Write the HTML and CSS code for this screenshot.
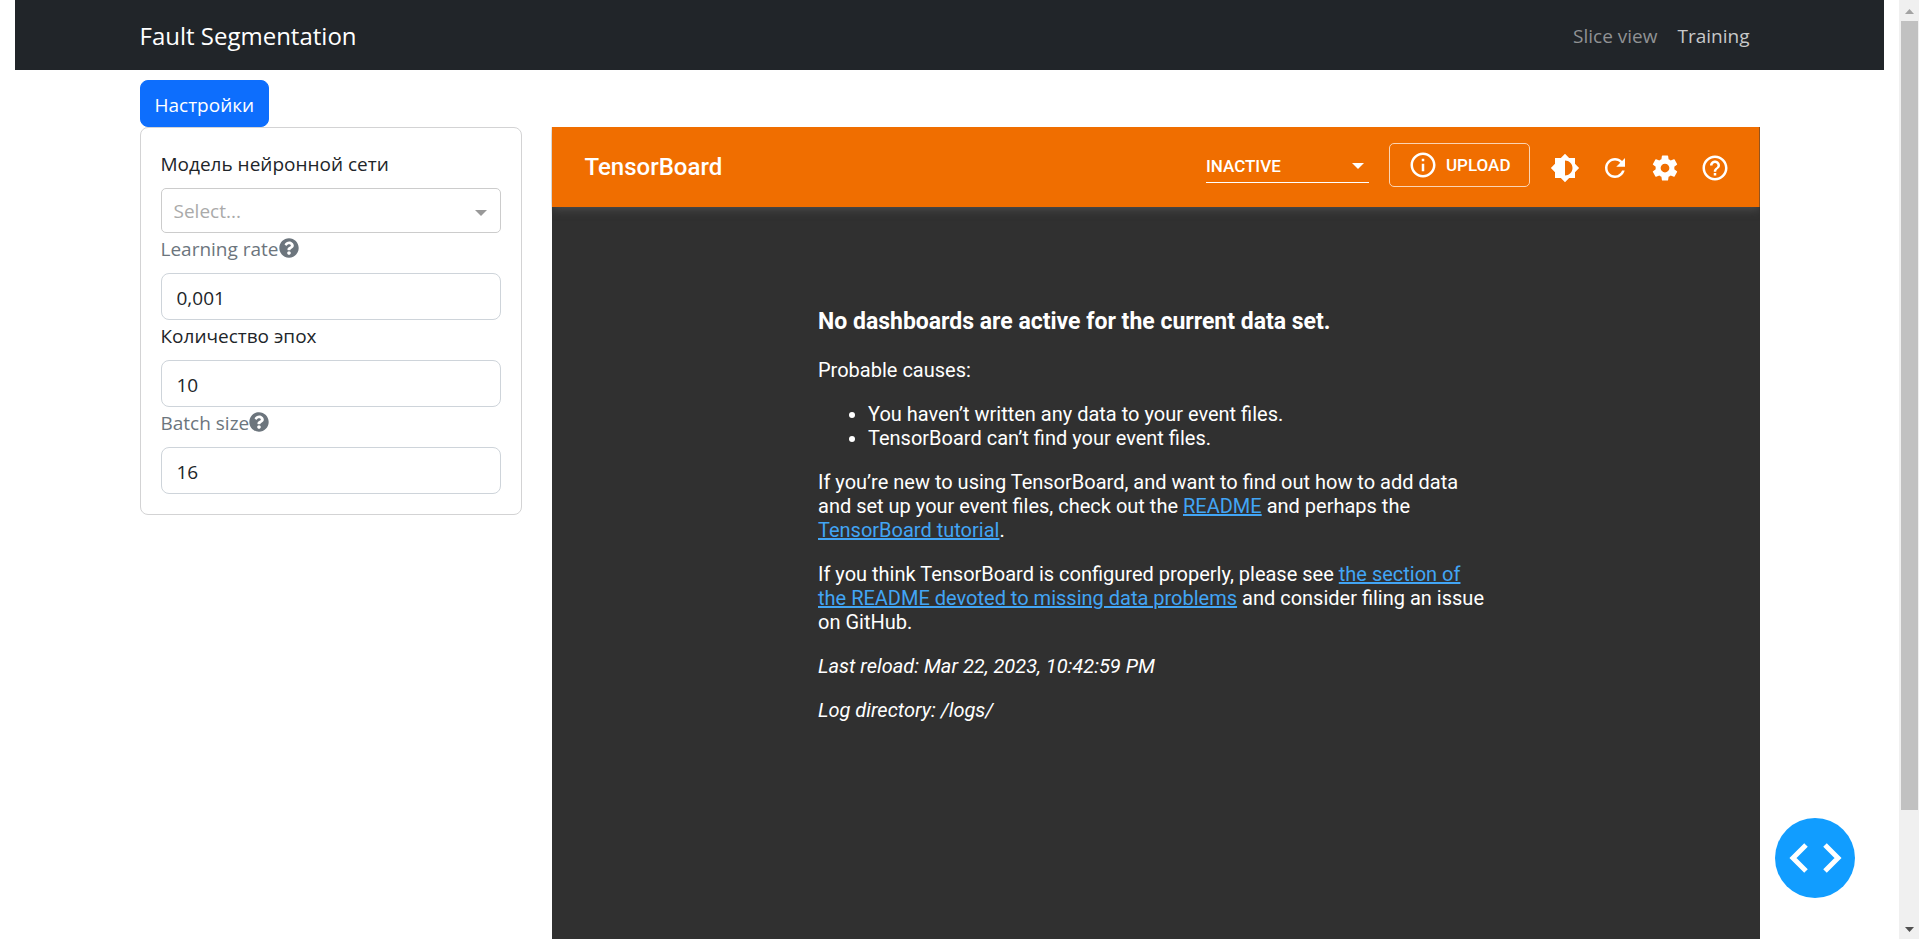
FILE: index.html
```html
<!DOCTYPE html>
<html lang="ru">
<head>
<meta charset="utf-8">
<title>Fault Segmentation</title>
<link rel="stylesheet" href="styles.css">
</head>
<body>
<div class="viewport">
  <div class="page">
    <header class="navbar">
      <a class="brand" href="#">Fault Segmentation</a>
      <nav class="nav-links">
        <a href="#">Slice view</a>
        <a class="active" href="#">Training</a>
      </nav>
    </header>

    <main class="container">
      <div class="toolbar"><button class="btn-primary" type="button">Настройки</button></div>
      <div class="columns">
        <form class="card">
          <label for="model">Модель нейронной сети</label>
          <div class="select-wrap">
            <select id="model"><option>Select...</option></select>
          </div>
          <label class="muted" for="rate">Learning rate<svg class="hint" viewBox="0 0 512 512" aria-hidden="true"><path d="M504 256c0 137-111 248-248 248S8 393 8 256 119 8 256 8s248 111 248 248zM262.700 90c-54.500 0-89.300 23-116.500 63.800-3.500 5.300-2.400 12.400 2.700 16.300l34.700 26.300c5.200 3.900 12.600 3 16.700-2.100 17.900-22.700 30.100-35.800 57.300-35.800 20.400 0 45.700 13.100 45.700 33 0 15-12.400 22.700-32.500 34C247.100 238.500 216 254.900 216 296v4c0 6.600 5.400 12 12 12h56c6.600 0 12-5.400 12-12v-1.300c0-28.500 83.200-29.600 83.200-106.700 0-58-60.200-102-116.500-102zM256 338c-25.400 0-46 20.600-46 46s20.600 46 46 46 46-20.600 46-46-20.600-46-46-46z"/></svg></label>
          <input id="rate" type="text" value="0,001">
          <label for="epochs">Количество эпох</label>
          <input id="epochs" type="text" value="10">
          <label class="muted" for="batch">Batch size<svg class="hint" viewBox="0 0 512 512" aria-hidden="true"><path d="M504 256c0 137-111 248-248 248S8 393 8 256 119 8 256 8s248 111 248 248zM262.700 90c-54.500 0-89.300 23-116.500 63.800-3.500 5.300-2.400 12.400 2.700 16.300l34.700 26.300c5.200 3.900 12.600 3 16.700-2.100 17.900-22.700 30.100-35.800 57.300-35.800 20.400 0 45.700 13.100 45.700 33 0 15-12.400 22.700-32.500 34C247.100 238.500 216 254.900 216 296v4c0 6.600 5.400 12 12 12h56c6.600 0 12-5.400 12-12v-1.300c0-28.500 83.200-29.600 83.200-106.700 0-58-60.200-102-116.500-102zM256 338c-25.400 0-46 20.600-46 46s20.600 46 46 46 46-20.600 46-46-20.600-46-46-46z"/></svg></label>
          <input id="batch" type="text" value="16">
        </form>

        <section class="board">
          <header class="board-bar">
            <h1>TensorBoard</h1>
            <div class="plugin-select">
              <select aria-label="Dashboard"><option>INACTIVE</option></select>
            </div>
            <button class="upload" type="button">
              <svg viewBox="0 0 24 24" aria-hidden="true"><path d="M11 7h2v2h-2zm0 4h2v6h-2zm1-9C6.480 2 2 6.480 2 12s4.480 10 10 10 10-4.480 10-10S17.520 2 12 2zm0 18c-4.410 0-8-3.590-8-8s3.590-8 8-8 8 3.590 8 8-3.590 8-8 8z"/></svg>
              <span>UPLOAD</span>
            </button>
            <div class="icon-row">
              <button type="button" aria-label="Theme"><svg viewBox="0 0 24 24"><path d="M20 15.310L23.310 12 20 8.690V4h-4.690L12 .69 8.690 4H4v4.690L.69 12 4 15.310V20h4.690L12 23.310 15.310 20H20v-4.690zM12 18V6c3.310 0 6 2.690 6 6s-2.690 6-6 6z"/></svg></button>
              <button type="button" aria-label="Reload"><svg viewBox="0 0 24 24"><path d="M17.650 6.350C16.200 4.900 14.210 4 12 4c-4.420 0-7.990 3.580-7.990 8s3.570 8 7.990 8c3.730 0 6.840-2.550 7.730-6h-2.080c-.82 2.330-3.040 4-5.650 4-3.310 0-6-2.690-6-6s2.690-6 6-6c1.660 0 3.140.69 4.220 1.780L13 11h7V4l-2.350 2.350z"/></svg></button>
              <button type="button" aria-label="Settings"><svg viewBox="0 0 24 24"><path d="M19.430 12.980c.04-.32.07-.64.07-.98s-.03-.66-.07-.98l2.110-1.650c.19-.15.24-.42.12-.64l-2-3.460c-.12-.22-.39-.3-.61-.22l-2.490 1c-.52-.4-1.080-.73-1.690-.98l-.38-2.650C14.460 2.180 14.250 2 14 2h-4c-.25 0-.46.18-.49.42l-.38 2.650c-.61.25-1.170.59-1.690.98l-2.490-1c-.23-.09-.49 0-.61.22l-2 3.460c-.13.22-.07.49.12.64l2.110 1.650c-.04.32-.07.65-.07.98s.03.66.07.98l-2.110 1.650c-.19.15-.24.42-.12.64l2 3.460c.12.22.39.3.61.22l2.490-1c.52.4 1.080.73 1.690.98l.38 2.650c.03.24.24.42.49.42h4c.25 0 .46-.18.49-.42l.38-2.650c.61-.25 1.170-.59 1.690-.98l2.490 1c.23.09.49 0 .61-.22l2-3.460c.12-.22.07-.49-.12-.64l-2.110-1.650zM12 15.500c-1.930 0-3.500-1.570-3.500-3.500s1.570-3.500 3.500-3.500 3.500 1.570 3.500 3.500-1.570 3.500-3.500 3.500z"/></svg></button>
              <button type="button" aria-label="Help"><svg viewBox="0 0 24 24"><path d="M11 18h2v-2h-2v2zm1-16C6.480 2 2 6.480 2 12s4.480 10 10 10 10-4.480 10-10S17.520 2 12 2zm0 18c-4.410 0-8-3.590-8-8s3.590-8 8-8 8 3.590 8 8-3.590 8-8 8zm0-14c-2.210 0-4 1.790-4 4h2c0-1.100.9-2 2-2s2 .9 2 2c0 2-3 1.750-3 5h2c0-2.250 3-2.500 3-5 0-2.210-1.790-4-4-4z"/></svg></button>
            </div>
          </header>
          <article class="message">
            <h2>No dashboards are active for the current data set.</h2>
            <p>Probable causes:</p>
            <ul>
              <li>You haven’t written any data to your event files.</li>
              <li>TensorBoard can’t find your event files.</li>
            </ul>
            <p>If you’re new to using TensorBoard, and want to find out how to add data and set up your event files, check out the <a href="#">README</a> and perhaps the <a href="#">TensorBoard tutorial</a>.</p>
            <p>If you think TensorBoard is configured properly, please see <a href="#">the section of the README devoted to missing data problems</a> and consider filing an issue on GitHub.</p>
            <p><i>Last reload: Mar 22, 2023, 10:42:59 PM</i></p>
            <p><i>Log directory: /logs/</i></p>
          </article>
        </section>
      </div>
    </main>

    <button class="debug" type="button" aria-label="Debug menu">
      <svg viewBox="0 0 80 80"><path d="M31 27L18 40l13 13M50 27l13 13-13 13"/></svg>
    </button>
  </div>

  <div class="scrollbar" aria-hidden="true">
    <svg class="up" viewBox="0 0 20 21"><path d="M6 14h9L10.500 9z"/></svg>
    <div class="track"><div class="thumb"></div></div>
    <svg class="down" viewBox="0 0 20 21"><path d="M6 9h9l-4.500 5z"/></svg>
  </div>
</div>
</body>
</html>
```
FILE: styles.css
```css
* { box-sizing: border-box; }

body {
  margin: 0;
  background: #fff;
  color: #212529;
  font: 19px/30px "Open Sans", "Noto Sans", sans-serif;
}

button, input, select { font: inherit; }
a { text-decoration: none; }

.viewport {
  display: grid;
  grid-template-columns: 1fr 20px;
  height: 100vh;
  overflow: hidden;
}

.page {
  position: relative;
  display: flex;
  flex-direction: column;
  min-height: 0;
  padding: 0 15px;
}

/* Navigation */
.navbar {
  display: flex;
  align-items: center;
  justify-content: space-between;
  flex: none;
  height: 70px;
  padding: 2px max(15px, calc((100% - 1620px) / 2)) 0;
  background: #212529;
}
.brand { color: #fff; font-size: 24px; }
.nav-links { display: flex; gap: 20px; padding-right: 10px; }
.nav-links a { color: #909294; }
.nav-links a.active { color: #c8c9ca; }

.container {
  display: flex;
  flex-direction: column;
  flex: 1;
  width: 100%;
  max-width: 1620px;
  min-height: 0;
  margin: 0 auto;
  padding-top: 10px;
}
.toolbar { display: flex; flex: none; }
.btn-primary {
  height: 47px;
  padding: 2px 14px 0;
  border: 1px solid #0d6efd;
  border-radius: 8px;
  background: #0d6efd;
  color: #fff;
}

.columns {
  display: grid;
  grid-template-columns: 382px 1fr;
  gap: 30px;
  flex: 1;
  min-height: 0;
}

/* Settings */
.card {
  display: flex;
  flex-direction: column;
  align-self: start;
  padding: 20px;
  border: 1px solid #d3d3d4;
  border-radius: 8px;
}
.card label { display: flex; align-items: center; height: 30px; margin-bottom: 10px; padding-top: 2px; }
.card .muted { color: #6c757d; }
.hint { width: 20px; height: 20px; margin-bottom: 2px; fill: #6c757d; }
.card input {
  width: 100%;
  height: 47px;
  padding: 2px 15px 0;
  border: 1px solid #ced4da;
  border-radius: 8px;
  background: #fff;
  color: #212529;
}
.select-wrap { position: relative; }
.select-wrap select {
  display: block;
  width: 100%;
  height: 45px;
  padding: 0 12px;
  border: 1px solid #ccc;
  border-radius: 5px;
  background: #fff;
  color: #aaa;
  appearance: none;
}
.select-wrap::after, .plugin-select::after {
  content: "";
  position: absolute;
  top: 22px;
  right: 14px;
  border: 6px solid transparent;
  border-top-color: #999;
  border-bottom: 0;
  pointer-events: none;
}

/* Board */
.board {
  display: flex;
  flex-direction: column;
  background: #303030;
  color: #fff;
  font: 20px/24px Roboto, sans-serif;
}
.board-bar {
  display: flex;
  align-items: center;
  flex: none;
  height: 80px;
  padding: 0 20px 0 33px;
  background: #f06e00;
  box-shadow: 0 1px 10px #555;
  clip-path: inset(0 0 -14px 0);
}
.board-bar h1 { margin: 0; font-size: 24px; font-weight: 500; line-height: 28px; }
.plugin-select { position: relative; width: 163px; margin: 0 20px 2px auto; }
.plugin-select select {
  display: block;
  width: 100%;
  height: 34px;
  padding: 0;
  border: 0;
  border-bottom: 1px solid #fff;
  background: transparent;
  color: #fff;
  font-size: 17px;
  font-weight: 500;
  appearance: none;
}
.plugin-select::after { top: 14px; right: 5px; border-top-color: #fff; }
.upload {
  display: flex;
  align-items: center;
  gap: 8px;
  height: 44px;
  margin: 0 10px 4px 0;
  padding: 0 18px;
  border: 1px solid #fbd4b3;
  border-radius: 5px;
  background: transparent;
  color: #fff;
  font-size: 17px;
  font-weight: 500;
}
.board-bar svg { display: block; width: 30px; height: 30px; fill: #fff; }
.icon-row { display: flex; padding-top: 2px; }
.icon-row button { width: 50px; height: 50px; padding: 10px; border: 0; background: transparent; }

.message { width: 675px; max-width: 100%; margin: 0 auto; padding-top: 101px; }
.message h2 { margin: 0 0 22px; font-size: 23px; font-weight: 700; line-height: 28px; }
.message p, .message ul { margin: 0 0 20px; }
.message ul { padding-left: 50px; }
.message a { color: #42a5f5; text-decoration: underline; }

/* Floating debug control */
.debug {
  position: absolute;
  right: 44px;
  bottom: 41px;
  width: 80px;
  height: 80px;
  padding: 0;
  border: 0;
  border-radius: 50%;
  background: #119dff;
}
.debug svg { display: block; fill: none; stroke: #fff; stroke-width: 5; }

/* Scroll bar */
.scrollbar { display: flex; flex-direction: column; background: #f0f0f0; }
.scrollbar svg { flex: none; width: 20px; height: 21px; }
.up { fill: #a3a3a3; }
.down { fill: #505050; }
.track { flex: 1; padding: 0 1px 0 2px; }
.thumb { height: 88%; background: #c1c1c1; }
```
